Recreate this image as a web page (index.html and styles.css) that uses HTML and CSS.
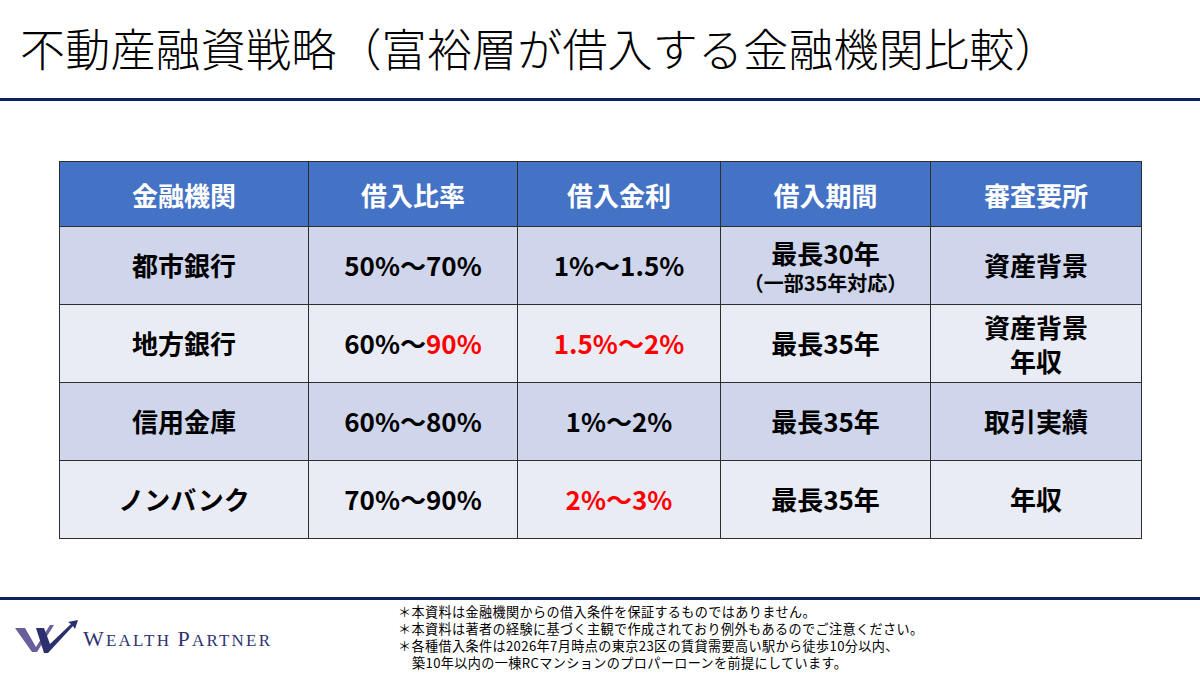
FILE: index.html
```html
<!DOCTYPE html>
<html lang="ja">
<head>
<meta charset="utf-8">
<link rel="stylesheet" href="styles.css">
</head>
<body>
<div class="slide">
  <header class="head">
    <h1 class="title">不動産融資戦略（富裕層が借入する金融機関比較）</h1>
  </header>
  <main class="content">
    <table class="cmp">
      <colgroup>
        <col class="c1"><col class="c2"><col class="c3"><col class="c4"><col class="c5">
      </colgroup>
      <thead>
        <tr><th>金融機関</th><th>借入比率</th><th>借入金利</th><th>借入期間</th><th>審査要所</th></tr>
      </thead>
      <tbody>
        <tr class="odd">
          <td>都市銀行</td><td>50%〜70%</td><td>1%〜1.5%</td>
          <td><div class="l1">最長30年</div><div class="sub">（一部35年対応）</div></td>
          <td>資産背景</td>
        </tr>
        <tr class="even">
          <td>地方銀行</td><td>60%〜<span class="red">90%</span></td><td><span class="red">1.5%〜2%</span></td>
          <td>最長35年</td>
          <td><div class="two">資産背景</div><div class="two">年収</div></td>
        </tr>
        <tr class="odd">
          <td>信用金庫</td><td>60%〜80%</td><td>1%〜2%</td><td>最長35年</td><td>取引実績</td>
        </tr>
        <tr class="even">
          <td>ノンバンク</td><td>70%〜90%</td><td><span class="red">2%〜3%</span></td><td>最長35年</td><td>年収</td>
        </tr>
      </tbody>
    </table>
  </main>
  <footer class="foot">
    <div class="logo">
      <svg class="mark" width="64" height="34" viewBox="0 0 64 34">
        <polygon fill="#6a5f9c" points="0,8 10,8 21,27 35,5 39,5 22,32 17,32"/>
        <polygon fill="#2b2f6e" points="21,8 29,8 35,24 56,4 53,2 63,0 60,9 58,6 33,33 29,33"/>
      </svg>
      <span class="brand"><span class="cap">W</span>EALTH <span class="cap">P</span>ARTNER</span>
    </div>
    <div class="notes">
      <p>＊本資料は金融機関からの借入条件を保証するものではありません。</p>
      <p>＊本資料は著者の経験に基づく主観で作成されており例外もあるのでご注意ください。</p>
      <p>＊各種借入条件は2026年7月時点の東京23区の賃貸需要高い駅から徒歩10分以内、</p>
      <p class="indent">築10年以内の一棟RCマンションのプロパーローンを前提にしています。</p>
    </div>
  </footer>
</div>
</body>
</html>
```
FILE: styles.css
```css
html, body {
  margin: 0;
  padding: 0;
  background: #ffffff;
}
.slide {
  width: 1200px;
  height: 675px;
  display: flex;
  flex-direction: column;
  font-family: "Noto Sans CJK JP", "Noto Sans", sans-serif;
  color: #000;
}
.head {
  height: 98px;
  border-bottom: 3px solid #0d225f;
  box-sizing: content-box;
  display: flex;
  align-items: center;
  padding-left: 20px;
}
.title {
  margin: 0;
  font-size: 45px;
  font-weight: 300;
  line-height: 1;
  letter-spacing: 0.2px;
  padding-bottom: 4px;
}
.content {
  flex: 1;
  padding-top: 60px;
  padding-left: 59px;
}
.cmp {
  border-collapse: collapse;
  width: 1082px;
  table-layout: fixed;
}
.c1 { width: 249px; }
.c2 { width: 209px; }
.c3 { width: 203px; }
.c4 { width: 210px; }
.c5 { width: 211px; }
.cmp th, .cmp td {
  border: 1.5px solid #2e2e2e;
  text-align: center;
  vertical-align: middle;
  font-weight: 700;
  padding: 0;
}
.cmp th {
  background: #4472c4;
  color: #ffffff;
  height: 64px;
  font-size: 26px;
}
.cmp td {
  height: 77px;
  font-size: 26px;
  line-height: 1.25;
}
.odd td { background: #cfd5ea; }
.even td { background: #e9ebf5; }
.red { color: #ff0000; }
.l1 { line-height: 34px; }
.sub { font-size: 20px; line-height: 26px; }
.two { line-height: 34px; }
.foot {
  height: 75px;
  border-top: 3px solid #0d225f;
  display: flex;
  align-items: flex-start;
}
.logo {
  width: 398px;
  display: flex;
  align-items: center;
  padding-left: 15px;
  padding-top: 20px;
  box-sizing: border-box;
}
.mark { display: block; }
.brand {
  margin-left: 4px;
  font-family: "Liberation Serif", "DejaVu Serif", serif;
  font-size: 17px;
  color: #2e3272;
  letter-spacing: 2.2px;
  padding-top: 4px;
}
.cap { font-size: 22px; }
.notes {
  padding-top: 3px;
}
.notes p {
  margin: 0;
  font-size: 13.1px;
  letter-spacing: 0.4px;
  line-height: 17px;
  white-space: nowrap;
}
.notes .indent { padding-left: 14px; }
```
